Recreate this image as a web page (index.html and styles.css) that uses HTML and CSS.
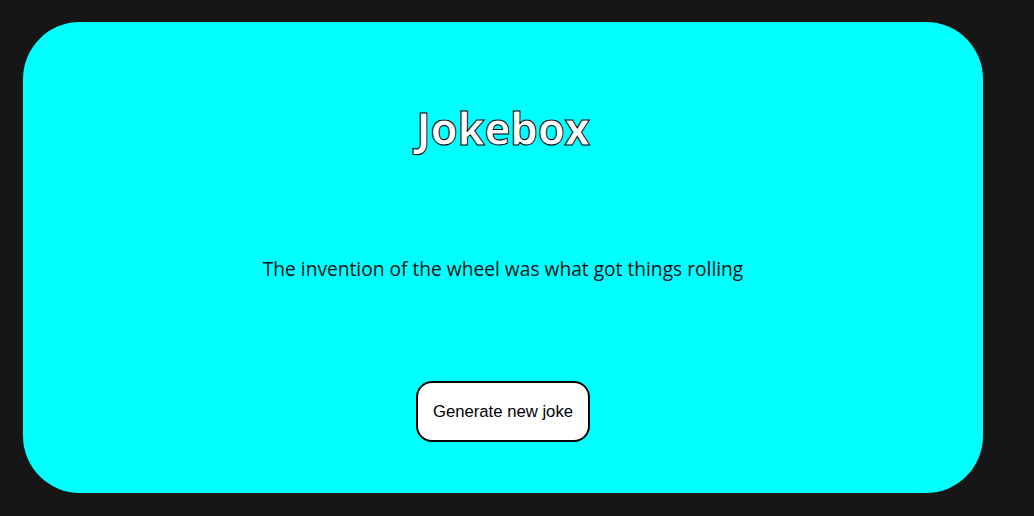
FILE: index.html
```html
<!DOCTYPE html>
<html lang="en">
<head>
<meta charset="utf-8">
<title>Jokebox</title>
<link rel="stylesheet" href="styles.css">
</head>
<body>
<main class="card">
  <h1 class="title">Jokebox</h1>
  <p class="joke">The invention of the wheel was what got things rolling</p>
  <button class="btn" type="button">Generate new joke</button>
</main>
</body>
</html>
```
FILE: styles.css
```css
html, body {
  margin: 0;
  padding: 0;
  background: #161616;
}
body {
  padding: 22px 0 0 23px;
  height: 516px;
  box-sizing: border-box;
  overflow: hidden;
}
.card {
  width: 960px;
  height: 471px;
  box-sizing: border-box;
  background: #00ffff;
  border-radius: 57px;
  display: flex;
  flex-direction: column;
  align-items: center;
  padding-top: 76px;
}
.title {
  margin: 0;
  font-family: "Open Sans", sans-serif;
  font-weight: 700;
  font-size: 44px;
  line-height: 60px;
  color: #ffffff;
  -webkit-text-stroke: 1px #000;
  letter-spacing: -0.3px;
}
.joke {
  margin: 97px 0 0;
  font-family: "Open Sans", sans-serif;
  font-size: 19.2px;
  line-height: 28px;
  color: #111;
}
.btn {
  margin-top: 98px;
  font-family: "Liberation Sans", Arial, sans-serif;
  font-size: 16.7px;
  line-height: 18px;
  color: #000;
  background: #fff;
  border: 2px solid #000;
  border-radius: 16px;
  padding: 20px 8px 19px;
  width: 174px;
  height: 61px;
  box-sizing: border-box;
  cursor: pointer;
}
```
